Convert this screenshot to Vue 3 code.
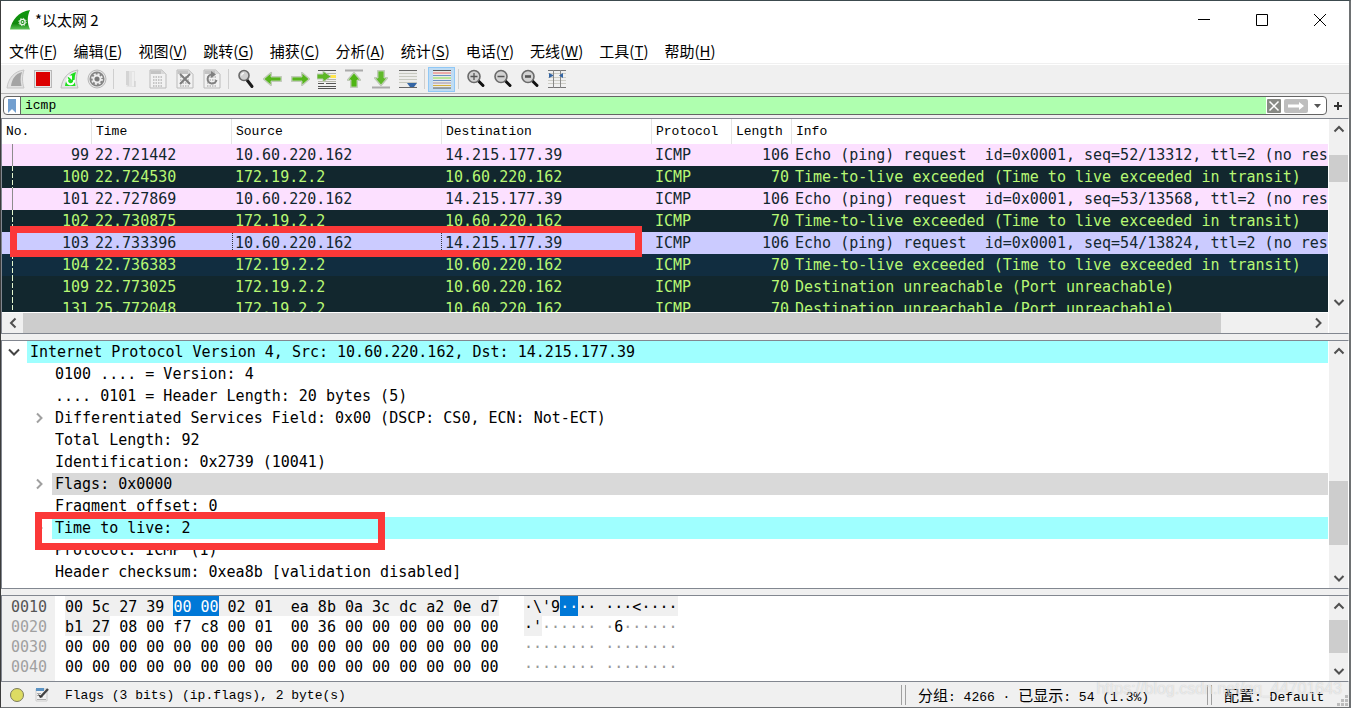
<script setup>
import { ref } from 'vue'

const menus = [
  ['文件', 'F'], ['编辑', 'E'], ['视图', 'V'], ['跳转', 'G'], ['捕获', 'C'], ['分析', 'A'],
  ['统计', 'S'], ['电话', 'Y'], ['无线', 'W'], ['工具', 'T'], ['帮助', 'H'],
]

const finPath = 'M1 19C2 10 8 2 18 1C16 7 16 13 18 19Z'
const finInner = 'M5 17C6 10 9 5 16 3C14 8 14.500 13 15.500 17Z'
const pagePath = 'M2 1H14L18 5V19H2Z'
const pageGrid = 'M5 8H15M5 11H15M5 14H15M5 17H15'
const arrowLeft = 'M1 10L8 4V8H18V12H8V16Z'
const arrowRight = 'M19 10L12 4V8H2V12H12V16Z'

const tools = [
  { id: 'start', label: '开始捕获' }, { id: 'stop', label: '停止捕获' },
  { id: 'restart', label: '重新开始捕获' }, { id: 'options', label: '捕获选项' },
  { id: 'sep1' },
  { id: 'open', label: '打开' }, { id: 'save', label: '保存' },
  { id: 'close', label: '关闭' }, { id: 'reload', label: '重新加载' },
  { id: 'sep2' },
  { id: 'find', label: '查找分组' }, { id: 'back', label: '上一个' }, { id: 'next', label: '下一个' },
  { id: 'goto', label: '转到分组' }, { id: 'first', label: '首个分组' },
  { id: 'last', label: '最新分组' }, { id: 'autoscroll', label: '自动滚动' },
  { id: 'sep3' },
  { id: 'colorize', label: '着色分组' },
  { id: 'sep4' },
  { id: 'zoomin', label: '放大' }, { id: 'zoomout', label: '缩小' },
  { id: 'zoomnormal', label: '普通大小' }, { id: 'resize', label: '调整列宽' },
]

const columns = ['No.', 'Time', 'Source', 'Destination', 'Protocol', 'Length', 'Info']
const req = (seq) => `Echo (ping) request  id=0x0001, seq=${seq}, ttl=2 (no resp`
const ttlInfo = 'Time-to-live exceeded (Time to live exceeded in transit)'
const portInfo = 'Destination unreachable (Port unreachable)'
const me = '10.60.220.162'
const packets = [
  { kind: 'request', cells: ['99', '22.721442', me, '14.215.177.39', 'ICMP', '106', req('52/13312')] },
  { kind: 'error', cells: ['100', '22.724530', '172.19.2.2', me, 'ICMP', '70', ttlInfo] },
  { kind: 'request', cells: ['101', '22.727869', me, '14.215.177.39', 'ICMP', '106', req('53/13568')] },
  { kind: 'error', cells: ['102', '22.730875', '172.19.2.2', me, 'ICMP', '70', ttlInfo] },
  { kind: 'request selected', cells: ['103', '22.733396', me, '14.215.177.39', 'ICMP', '106', req('54/13824')] },
  { kind: 'error hover', cells: ['104', '22.736383', '172.19.2.2', me, 'ICMP', '70', ttlInfo] },
  { kind: 'error', cells: ['109', '22.773025', '172.19.2.2', me, 'ICMP', '70', portInfo] },
  { kind: 'error', cells: ['131', '25.772048', '172.19.2.2', me, 'ICMP', '70', portInfo] },
]

const fields = [
  { text: 'Internet Protocol Version 4, Src: 10.60.220.162, Dst: 14.215.177.39', root: true, mark: 'cyan', open: true },
  { text: '0100 .... = Version: 4' },
  { text: '.... 0101 = Header Length: 20 bytes (5)' },
  { text: 'Differentiated Services Field: 0x00 (DSCP: CS0, ECN: Not-ECT)', closed: true },
  { text: 'Total Length: 92' },
  { text: 'Identification: 0x2739 (10041)' },
  { text: 'Flags: 0x0000', closed: true, mark: 'grey' },
  { text: 'Fragment offset: 0' },
  { text: 'Time to live: 2', closed: true, mark: 'cyan' },
  { text: 'Protocol: ICMP (1)' },
  { text: 'Header checksum: 0xea8b [validation disabled]' },
]

const zeros = '00 00 00 00 00 00 00 00  00 00 00 00 00 00 00 00'
const hexRows = [
  {
    offset: '0010', current: true,
    hex: [['00 5c 27 39 ', 'proto'], ['00 00', 'sel'], [' 02 01  ea 8b 0a 3c dc a2 0e d7', 'proto']],
    ascii: [["·\\'9", 'proto'], ['··', 'sel'], ['·· ···<····', 'proto']],
  },
  {
    offset: '0020',
    hex: [['b1 27', 'proto'], [' 08 00 f7 c8 00 01  00 36 00 00 00 00 00 00', '']],
    ascii: [["·'", 'proto'], ['······ ·', 'dim'], ['6', ''], ['······', 'dim']],
  },
  { offset: '0030', hex: [[zeros, '']], ascii: [['········ ········', 'dim']] },
  { offset: '0040', hex: [[zeros, '']], ascii: [['········ ········', 'dim']] },
]

const filter = ref('icmp')
</script>

<template>
  <div class="window">
    <header class="titlebar">
      <svg class="logo" viewBox="0 0 20 20">
        <defs>
          <linearGradient id="fin" x1="0" y1="0" x2="0" y2="1">
            <stop offset="0" stop-color="#0e9a0e" /><stop offset=".7" stop-color="#12890f" /><stop offset="1" stop-color="#5fc45a" />
          </linearGradient>
        </defs>
        <path d="M0 19.500C2 10 8 2 20 0C17 7 17 13 20 19.500Z" fill="url(#fin)" />
        <circle cx="12.500" cy="12" r="2.600" fill="none" stroke="#e8f6e6" stroke-width="1.300" />
        <circle cx="12.500" cy="12" r="3.700" fill="none" stroke="#e8f6e6" stroke-width="1" stroke-dasharray="1.400 1.500" />
        <circle cx="12.500" cy="12" r="1" fill="#e8f6e6" />
      </svg>
      <h1 class="title">*以太网 2</h1>
      <button class="winbtn" aria-label="最小化"><svg viewBox="0 0 12 12"><path d="M0 5.500H12" /></svg></button>
      <button class="winbtn" aria-label="最大化"><svg viewBox="0 0 12 12"><path d="M.5.500H11.500V11.500H.5Z" /></svg></button>
      <button class="winbtn" aria-label="关闭"><svg viewBox="0 0 12 12"><path d="M0 0L12 12M12 0L0 12" /></svg></button>
    </header>

    <nav class="menubar">
      <button v-for="m in menus" :key="m[1]" class="menu">{{ m[0] }}(<u>{{ m[1] }}</u>)</button>
    </nav>

    <div class="toolbar">
      <template v-for="t in tools" :key="t.id">
        <span v-if="!t.label" class="sep"></span>
        <button v-else class="tool" :class="{ on: t.id === 'colorize' }" :aria-label="t.label">
          <svg viewBox="0 0 20 20">
            <template v-if="t.id === 'start'">
              <path :d="finPath" fill="#e2e2e2" stroke="#c6c6c6" />
              <path :d="finInner" fill="#a4a4a4" />
            </template>
            <template v-else-if="t.id === 'stop'">
              <rect x="1.500" y="1.500" width="17" height="17" fill="#e8e8e8" stroke="#b8b8b8" />
              <rect x="3" y="3" width="14" height="14" fill="#dc0000" />
            </template>
            <template v-else-if="t.id === 'restart'">
              <path :d="finPath" fill="#e6e6e6" stroke="#bdbdbd" />
              <path :d="finInner" fill="#1fe01f" />
              <path d="M14 11A3.500 3.500 0 1 1 8 9.500" fill="none" stroke="#fff" stroke-width="2" />
              <path d="M7 6.500H12V11Z" fill="#fff" />
            </template>
            <template v-else-if="t.id === 'options'">
              <circle cx="10" cy="10" r="9" fill="#e6e6e6" stroke="#b8b8b8" />
              <circle cx="10" cy="10" r="7.500" fill="#858585" />
              <circle cx="10" cy="10" r="3.500" fill="none" stroke="#eee" stroke-width="1.800" />
              <circle cx="10" cy="10" r="5" fill="none" stroke="#eee" stroke-width="1.800" stroke-dasharray="2 1.930" />
              <circle cx="10" cy="10" r="2" fill="#777" />
            </template>
            <template v-else-if="t.id === 'open'">
              <path d="M5 2H14V18H5L7 16V4Z" fill="#e4e4e4" /><path d="M5 2H8V17L5 16Z" fill="#d4d4d4" /><path d="M12 3V17" stroke="#fafafa" /><path d="M14 12V18" stroke="#c8c8c8" />
            </template>
            <template v-else-if="t.id === 'save' || t.id === 'close' || t.id === 'reload'">
              <path :d="pagePath" fill="#f2f2f2" stroke="#bababa" />
              <path d="M2.500 1.500H13.500V5H2.500Z" fill="#c4c4c4" /><path d="M14 1V5H18Z" fill="#d8d8d8" />
              <path :d="pageGrid" stroke="#c6c6c6" stroke-width="2" stroke-dasharray="1.500 1" />
              <path v-if="t.id === 'close'" d="M5 5L15 15M15 5L5 15" stroke="#7c7c7c" stroke-width="2" />
              <template v-if="t.id === 'reload'">
                <path d="M10 5.500A4.500 4.500 0 1 0 14.500 11" fill="none" stroke="#808080" stroke-width="2" />
                <path d="M9 2L14 5.500L9 9Z" fill="#808080" />
              </template>
            </template>
            <template v-else-if="t.id === 'find'">
              <path d="M11 11L16 17.500" stroke="#1c1c1c" stroke-width="3" stroke-linecap="round" />
              <circle cx="8" cy="6.500" r="5" fill="#cfcfcf" stroke="#696969" stroke-width="1.600" />
              <path d="M5.500 6.500A3 3 0 0 1 8 4" fill="none" stroke="#f6f6f6" stroke-width="1.500" />
            </template>
            <template v-else-if="t.id === 'back' || t.id === 'next'">
              <path :d="t.id === 'back' ? arrowLeft : arrowRight" fill="#55b41b" stroke="#b9c2b2" stroke-width="2" stroke-linejoin="round" />
              <path :d="t.id === 'back' ? arrowLeft : arrowRight" fill="#57b51d" stroke="#cdd8c5" stroke-width=".8" />
            </template>
            <template v-else-if="t.id === 'goto'">
              <path d="M1 1.500H19M1 17.500H19M1 19.500H19M9 14.500H19M1 14.500H7" stroke="#555" />
              <path d="M10 4.500H19M10 10.500H19M1 12.500H19" stroke="#b5b5aa" />
              <path d="M11 7.500H19" stroke="#ffe54c" stroke-width="3" />
              <path d="M0 5H6V2L14 7.500L6 13V10H0Z" fill="#5db726" stroke="#bdc8b5" stroke-width="1" />
            </template>
            <template v-else-if="t.id === 'first'">
              <path d="M1 1.500H19" stroke="#aaa" stroke-width="2" />
              <path d="M10 4L16 11H13V18H7V11H4Z" fill="#50b515" stroke="#b9c2b2" stroke-width="2" stroke-linejoin="round" />
              <path d="M10 4L16 11H13V18H7V11H4Z" fill="#50b515" stroke="#cdd8c5" stroke-width=".8" />
            </template>
            <template v-else-if="t.id === 'last'">
              <path d="M1 18.500H19" stroke="#aaa" stroke-width="2" />
              <path d="M10 16L16 9H13V2H7V9H4Z" fill="#50b515" stroke="#b9c2b2" stroke-width="2" stroke-linejoin="round" />
              <path d="M10 16L16 9H13V2H7V9H4Z" fill="#60b92b" stroke="#cdd8c5" stroke-width=".8" />
            </template>
            <template v-else-if="t.id === 'autoscroll'">
              <rect x="1" y="1" width="18" height="18" fill="#ececea" />
              <path d="M1 1.500H19M1 18.500H19" stroke="#666" />
              <path d="M1 4.500H19M1 7.500H19M1 10.500H19M1 13.500H19" stroke="#c6c8bf" />
              <path d="M9 14H19L16 18H12Z" fill="#3465a4" />
            </template>
            <template v-else-if="t.id === 'colorize'">
              <rect x="1" y="1" width="18" height="18" fill="#e9ebe6" />
              <path d="M1 1.500H19" stroke="#555" /><path d="M1 4H19" stroke="#f06a6a" />
              <path d="M1 6.500H19" stroke="#6b91c4" /><path d="M1 9H19" stroke="#86dc4a" />
              <path d="M1 11.500H19" stroke="#6b91c4" /><path d="M1 14H19" stroke="#a08eab" />
              <path d="M1 16.500H19" stroke="#d6b23c" /><path d="M1 19H19" stroke="#555" />
            </template>
            <template v-else-if="t.id === 'resize'">
              <path d="M1 4.500H19M1 8.500H19M1 11.500H19M1 14.500H19" stroke="#cdcdc6" />
              <path d="M1 1.500H19M1 18.500H19" stroke="#777" />
              <path d="M6.500 1V19M13.500 1V19" stroke="#888" />
              <path d="M2 4L6 6V7L2 9ZM16 4V9L12 6.500Z" fill="#3465a4" />
            </template>
            <template v-else>
              <path d="M11.500 11L17 16.500" stroke="#111" stroke-width="3" stroke-linecap="round" />
              <circle cx="8" cy="7.500" r="6" fill="#d2d2d2" stroke="#6a6a6a" stroke-width="1.600" />
              <path v-if="t.id === 'zoomin'" d="M4.500 7.500H11.500M8 4V11" stroke="#555" stroke-width="1.300" />
              <path v-else-if="t.id === 'zoomout'" d="M4.500 7.500H11.500" stroke="#555" stroke-width="1.500" />
              <path v-else d="M5 7.500H11" stroke="#555" stroke-width="2.600" />
            </template>
          </svg>
        </button>
      </template>
    </div>

    <div class="filterbar">
      <div class="field">
        <button class="bookmark" aria-label="书签"><svg viewBox="0 0 8 14"><path d="M0 0H8V14L4 10L0 14Z" fill="#729fcf" /></svg></button>
        <input v-model="filter" class="expr" aria-label="显示过滤器" spellcheck="false" />
        <button class="clear" aria-label="清除"><svg viewBox="0 0 14 14"><rect width="14" height="14" rx="1" fill="#888a85" /><path d="M2.500 2.500L11.500 11.500M11.500 2.500L2.500 11.500" stroke="#fff" stroke-width="1.500" /></svg></button>
        <button class="apply" aria-label="应用"><svg viewBox="0 0 24 14"><rect width="24" height="14" rx="2" fill="#bebebe" /><path d="M4 5.500H15V3L20 7L15 11V8.500H4Z" fill="#fff" /></svg></button>
        <button class="drop" aria-label="历史"><svg viewBox="0 0 8 4"><path d="M0 0H7L3.500 4Z" fill="#555" /></svg></button>
      </div>
      <button class="add" aria-label="添加"><svg viewBox="0 0 8 8"><path d="M0 4H8M4 0V8" stroke="#333" stroke-width="2" /></svg></button>
    </div>

    <main class="panes">
      <section class="pane list">
        <div class="body">
          <table class="packets">
            <colgroup><col v-for="(c, i) in columns" :key="c" :class="'c' + i" /></colgroup>
            <thead><tr><th v-for="c in columns" :key="c">{{ c }}</th></tr></thead>
            <tbody>
              <tr v-for="p in packets" :key="p.cells[0]" :class="p.kind">
                <td v-for="(c, i) in p.cells" :key="i" :class="{ num: i === 0 || i === 5, rel: i === 0, focus: i === 2 }">{{ c }}</td>
              </tr>
            </tbody>
          </table>
        </div>
        <div class="scroll v">
          <button aria-label="向上"><svg viewBox="0 0 12 12"><path d="M1.500 8.500L6 4L10.500 8.500" /></svg></button>
          <i :style="{ flexGrow: 16 }"></i><b :style="{ flexGrow: 27 }"></b><i :style="{ flexGrow: 110 }"></i>
          <button aria-label="向下"><svg viewBox="0 0 12 12"><path d="M1.500 4L6 8.500L10.500 4" /></svg></button>
        </div>
        <div class="scroll h">
          <button aria-label="向左"><svg viewBox="0 0 12 12"><path d="M8.500 1.500L4 6L8.500 10.500" /></svg></button>
          <b :style="{ flexGrow: 1199 }"></b><i :style="{ flexGrow: 86 }"></i>
          <button aria-label="向右"><svg viewBox="0 0 12 12"><path d="M4 1.500L8.500 6L4 10.500" /></svg></button>
        </div>
        <span class="corner"></span>
        <span class="callout packet"></span>
      </section>

      <section class="pane details">
        <ul class="body tree">
          <li v-for="f in fields" :key="f.text" :class="{ root: f.root }">
            <span class="twist">
              <svg v-if="f.open" viewBox="0 0 12 12"><path d="M1 3.500L6 8.500L11 3.500" stroke="#444" /></svg>
              <svg v-else-if="f.closed" viewBox="0 0 12 12"><path d="M4 1.500L8.500 6L4 10.500" stroke="#a0a0a0" /></svg>
            </span>
            <span class="label" :class="f.mark">{{ f.text }}</span>
          </li>
        </ul>
        <div class="scroll v">
          <button aria-label="向上"><svg viewBox="0 0 12 12"><path d="M1.500 8.500L6 4L10.500 8.500" /></svg></button>
          <i :style="{ flexGrow: 120 }"></i><b :style="{ flexGrow: 64 }"></b><i :style="{ flexGrow: 23 }"></i>
          <button aria-label="向下"><svg viewBox="0 0 12 12"><path d="M1.500 4L6 8.500L10.500 4" /></svg></button>
        </div>
        <span class="callout ttl"></span>
      </section>

      <section class="pane bytes">
        <div class="body dump">
          <div v-for="r in hexRows" :key="r.offset" class="line">
            <span class="offset" :class="{ current: r.current }">{{ r.offset }}</span>
            <span class="hex"><span v-for="(s, i) in r.hex" :key="i" :class="s[1]">{{ s[0] }}</span></span>
            <span class="ascii"><span v-for="(s, i) in r.ascii" :key="i" :class="s[1]">{{ s[0] }}</span></span>
          </div>
        </div>
        <div class="scroll v">
          <button aria-label="向上"><svg viewBox="0 0 12 12"><path d="M1.500 8.500L6 4L10.500 8.500" /></svg></button>
          <i :style="{ flexGrow: 4 }"></i><b :style="{ flexGrow: 33 }"></b><i :style="{ flexGrow: 8 }"></i>
          <button aria-label="向下"><svg viewBox="0 0 12 12"><path d="M1.500 4L6 8.500L10.500 4" /></svg></button>
        </div>
      </section>
    </main>

    <footer class="status">
      <button class="expert" aria-label="专家信息"></button>
      <button class="note" aria-label="捕获注释">
        <svg viewBox="0 0 14 14"><path d="M1 1H12V13H1Z" fill="#f2f2f2" stroke="#ccc" /><path d="M1 0H9V3H1Z" fill="#5b93c4" /><path d="M2 5.500H6M2 7.500H5M2 11.500H11" stroke="#aaa" /><path d="M13 1L6 8.500" fill="none" stroke="#444" stroke-width="2.400" /><path d="M3 6L5 10L8 9" fill="#333" /></svg>
      </button>
      <span class="message">Flags (3 bits) (ip.flags), 2 byte(s)</span>
      <span class="section counts"><span class="cjk">分组</span>: 4266 · <span class="cjk">已显示</span>: 54 (1.3%)</span>
      <span class="section profile"><span class="cjk">配置</span>: Default</span>
      <svg class="grip" viewBox="0 0 11 11"><path d="M8 0H11V3H8ZM4 4H7V7H4ZM8 4H11V7H8ZM0 8H3V11H0ZM4 8H7V11H4ZM8 8H11V11H8Z" fill="#bcbcbc" /></svg>
      <span class="watermark">https://blog.csdn.net/qq_44701643</span>
    </footer>
  </div>
</template>

<style>
body { margin: 0; }
</style>

<style scoped>
.window {
  box-sizing: border-box;
  height: 100vh;
  display: flex;
  flex-direction: column;
  position: relative;
  background: #f0f0f0;
  border: 1px solid #6e7173;
  border-right-width: 2px;
  border-top-color: #3c4a4e;
  border-left-color: #3c3c3c;
  color: #000;
  font: 15px/20px "Noto Sans CJK SC", sans-serif;
  overflow: hidden;
}
button { border: 0; padding: 0; margin: 0; background: none; color: inherit; font: inherit; display: flex; align-items: center; justify-content: center; }
svg { display: block; }
.titlebar { flex: none; height: 37px; display: flex; align-items: center; background: #fff; }
.logo { width: 20px; height: 20px; margin-left: 9px; }
.title { margin: 0 auto 0 5px; font-size: 15px; font-weight: 400; }
.winbtn { width: 58px; height: 36px; }
.winbtn svg { width: 12px; height: 12px; overflow: visible; fill: none; stroke: #000; }
.menubar { flex: none; height: 25px; display: flex; align-items: center; gap: 16px; padding-left: 8px; background: #fff; border-bottom: 1px solid #f0f0f0; }
.menu { display: block; white-space: nowrap; }
.menu u { text-underline-offset: 2px; }
.toolbar { flex: none; height: 28px; display: flex; align-items: center; padding-left: 1px; border-top: 1px solid #fff; border-bottom: 1px solid #b4b4b4; }
.tool { box-sizing: border-box; width: 27px; height: 25px; }
.tool svg { width: 20px; height: 20px; }
.tool.on { background: #c0dcf3; border: 1px solid #90c8f6; }
.sep { width: 7px; height: 20px; background: linear-gradient(#cfcfcf, #cfcfcf) center / 1px 100% no-repeat; }
.filterbar { flex: none; height: 24px; display: flex; align-items: flex-start; padding: 2px 0 0 2px; box-sizing: border-box; }
.field { box-sizing: border-box; flex: 1; min-width: 0; height: 19px; display: flex; background: #fff; border: 1px solid #646464; border-radius: 4px; overflow: hidden; }
.bookmark { width: 17px; border-right: 1px solid #646464; }
.bookmark svg { width: 8px; height: 14px; }
.expr { flex: 1; min-width: 0; border: 0; outline: 0; padding: 0 4px; background: #afffaf; font: 13px/17px "Liberation Mono", monospace; color: #000; }
.clear { width: 16px; }
.clear svg { width: 14px; height: 14px; }
.apply { width: 28px; }
.apply svg { width: 24px; height: 14px; }
.drop { width: 16px; }
.drop svg { width: 8px; height: 4px; }
.add { width: 22px; height: 19px; }
.add svg { width: 8px; height: 8px; }

.panes { flex: 1; min-height: 0; display: flex; flex-direction: column; gap: 6px; }
.pane { box-sizing: border-box; min-height: 0; display: grid; grid-template-columns: minmax(0, 1fr) 19px; position: relative; border: 1px solid #828790; border-right-color: #fff; background: #fff; column-gap: 1px; }
.list { flex: 216 216 216px; grid-template-rows: minmax(0, 1fr) 21px; }
.details { flex: 249 249 249px; }
.bytes { flex: 87 87 87px; }
.details, .bytes { grid-template-rows: minmax(0, 1fr); }
.body { overflow: hidden; font: 15px/22px "DejaVu Sans Mono", monospace; }
.packets { width: 100%; table-layout: fixed; border-collapse: separate; border-spacing: 0; }
.c0 { width: 90px; }
.c1 { width: 140px; }
.c2, .c3 { width: 210px; }
.c4 { width: 80px; }
.c5 { width: 60px; }
th { height: 25px; box-sizing: border-box; padding: 0 0 0 4px; text-align: left; font: 13px/25px "Liberation Mono", monospace; border-right: 1px solid #e5e5e5; }
th:last-child { border-right: 0; }
td { height: 22px; padding: 0 3px; white-space: pre; overflow: hidden; }
td:last-child { padding-right: 0; }
.num { text-align: right; }
.request { background: #fce0ff; color: #12272e; }
.error { background: #12272e; color: #b7f774; }
.selected { background: #cbcbff; }
.hover { background: #112d40; }
.rel { background: linear-gradient(#8c8c8c, #8c8c8c) 10px 0 / 1px 100% no-repeat; }
.error .rel { background: repeating-linear-gradient(#e4f7cf 0 5px, transparent 5px 7px) 10px 0 / 1px 100% no-repeat; }
.selected .focus { outline: 1px dotted #333; outline-offset: -1px; }

.scroll { display: flex; background: #f0f0f0; }
.scroll b { background: #cdcdcd; }
.scroll i, .scroll b { flex-basis: 0; }
.scroll.v { flex-direction: column; }
.scroll.v button { height: 20px; }
.scroll.h { border-top: 1px solid #fff; }
.scroll.h button { width: 21px; }
.scroll svg { width: 12px; height: 12px; fill: none; stroke: #505050; stroke-width: 2; }
.corner { background: #f0f0f0; }

.tree { list-style: none; margin: 0; padding: 0; white-space: pre; }
.tree li { height: 22px; display: flex; }
.twist { width: 50px; display: flex; align-items: center; justify-content: flex-end; box-sizing: border-box; padding-right: 7px; }
.root .twist { width: 25px; }
.twist svg { width: 12px; height: 12px; fill: none; stroke-width: 2; }
.label { flex: 1; padding-left: 3px; overflow: hidden; }
.cyan { background: #9fffff; }
.grey { background: #d9d9d9; }

.dump { line-height: 22px; background: linear-gradient(#f0f0f0, #f0f0f0) 0 0 / 53px 100% no-repeat; }
.line { height: 20px; display: flex; white-space: pre; }
.line span span { display: inline-block; height: 20px; }
.offset { width: 63px; box-sizing: border-box; padding-left: 9px; color: #a0a0a0; }
.current { color: #555; }
.hex { width: 459px; }
.proto { background: #f0f0f0; }
.sel { background: #0078d7; color: #fff; }
.dim { color: #999; }

.callout { position: absolute; box-sizing: border-box; border: 7px solid #fb3838; pointer-events: none; }
.packet { left: 8px; top: 107px; width: 632px; height: 31px; }
.ttl { left: 33px; top: 171px; width: 350px; height: 38px; }

.status { flex: none; height: 25px; display: flex; align-items: center; position: relative; font: 13px/24px "Liberation Mono", monospace; white-space: pre; }
.expert { width: 14px; height: 14px; margin-left: 9px; box-sizing: border-box; border: 1px solid #7b7b5c; border-radius: 50%; background: #dddc62; }
.note { margin: 0 16px 0 11px; }
.note svg { width: 14px; height: 14px; }
.message { flex: 1; padding-top: 2px; }
.section { box-sizing: border-box; border-left: 1px solid #a0a0a0; padding-left: 16px; height: 20px; line-height: 20px; background: linear-gradient(#a0a0a0, #a0a0a0) 3px 0 / 1px 100% no-repeat; }
.counts { width: 306px; }
.profile { width: 142px; }
.cjk { font: 15px/20px "Noto Sans CJK SC", sans-serif; }
.grip { position: absolute; right: 1px; bottom: 1px; width: 11px; height: 11px; }
.watermark { position: absolute; right: 7px; top: -4px; font: 16px/22px "Liberation Sans", sans-serif; color: rgba(255, 255, 255, .6); text-shadow: 0 0 1px rgba(120, 120, 120, .4); }
</style>
